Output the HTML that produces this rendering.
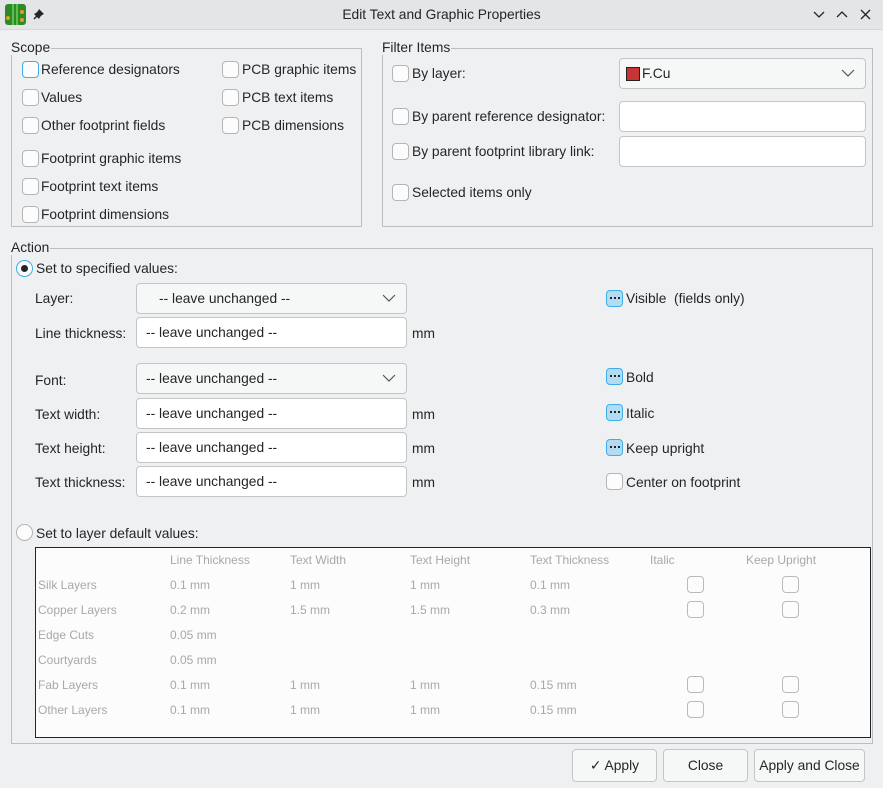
<!DOCTYPE html>
<html><head><meta charset="utf-8"><style>
*{box-sizing:border-box;margin:0;padding:0}
body{width:883px;height:788px;overflow:hidden;background:#eff0f1;font-family:"Liberation Sans","DejaVu Sans",sans-serif;font-size:13.8px;color:#232627;position:relative}
div,span{position:absolute}
.t{white-space:nowrap;line-height:16px}
.cb{width:17px;height:17px;border:1px solid #b3b5b7;border-radius:4px;background:#fcfcfc}
.gb{border:1px solid #bcbebf}
.gl{background:#eff0f1;padding:0 1px;line-height:14px;white-space:nowrap}
.in{background:#fff;border:1px solid #c3c5c7;border-radius:4px;height:31px;padding:0 9px;line-height:29px;white-space:nowrap}
.dd{background:#f6f7f7;border:1px solid #c3c5c7;border-radius:4px;height:31px;line-height:29px;white-space:nowrap}
.ch{position:absolute;right:9px;top:9px;width:16px;height:10px}
.tc{width:17px;height:17px;border:1px solid #b8babc;border-radius:4px;background:#fcfcfc}
.tri{width:17px;height:17px;border:1px solid #3daee9;border-radius:4px;background:#b3dcf3}
.tri:after{content:"";position:absolute;left:3px;top:6px;width:2px;height:2px;background:#232627;box-shadow:4px 0 #232627,8px 0 #232627}
.g{color:#a6a8aa;font-size:12px}
.btn{border:1px solid #c3c5c7;border-radius:4px;background:#f6f7f7;height:33px;line-height:31px;text-align:center}
</style></head><body>
<div style="left:0;top:0;width:883px;height:30px;background:#e3e5e7;border-bottom:1px solid #d5d7d9"></div>
<div style="left:5px;top:4px;width:21px;height:21px;background:#2d8a2a;border-radius:3px;overflow:hidden">
<span style="left:1px;top:12px;width:4px;height:4px;background:#e0a020;border-radius:2px"></span>
<span style="left:15px;top:6px;width:4px;height:4px;background:#e0a020;border-radius:2px"></span>
<span style="left:15px;top:14px;width:4px;height:4px;background:#e0a020;border-radius:2px"></span>
<span style="left:7px;top:0;width:2px;height:21px;background:#5fbf4a"></span>
<span style="left:11px;top:0;width:2px;height:21px;background:#5fbf4a"></span></div>
<svg style="position:absolute;left:33px;top:8px" width="12" height="12"><path d="M6 1l5 5-2 1-2 2-1 2-5-5 2-1 2-2z" fill="#232627"/><path d="M4 8l-3 3" stroke="#232627" stroke-width="1.5"/></svg>
<div class="t" style="left:0;width:883px;text-align:center;top:7px">Edit Text and Graphic Properties</div>
<svg style="position:absolute;left:812px;top:8px" width="60" height="14" stroke="#232627" stroke-width="1.3" fill="none"><path d="M2 4l5 5 5-5"/><path d="M25 9l5-5 5 5"/><path d="M49 2l9 9M58 2l-9 9"/></svg>

<div class="gb" style="left:11px;top:48px;width:351px;height:179px"></div>
<div class="gl t" style="left:10px;top:41px">Scope</div>
<div class="cb" style="left:22px;top:61px;border-color:#3daee9"></div><div class="t" style="left:41px;top:62px">Reference designators</div>
<div class="cb" style="left:22px;top:89px"></div><div class="t" style="left:41px;top:90px">Values</div>
<div class="cb" style="left:22px;top:117px"></div><div class="t" style="left:41px;top:118px">Other footprint fields</div>
<div class="cb" style="left:22px;top:150px"></div><div class="t" style="left:41px;top:151px">Footprint graphic items</div>
<div class="cb" style="left:22px;top:178px"></div><div class="t" style="left:41px;top:179px">Footprint text items</div>
<div class="cb" style="left:22px;top:206px"></div><div class="t" style="left:41px;top:207px">Footprint dimensions</div>
<div class="cb" style="left:222px;top:61px"></div><div class="t" style="left:242px;top:62px">PCB graphic items</div>
<div class="cb" style="left:222px;top:89px"></div><div class="t" style="left:242px;top:90px">PCB text items</div>
<div class="cb" style="left:222px;top:117px"></div><div class="t" style="left:242px;top:118px">PCB dimensions</div>

<div class="gb" style="left:382px;top:48px;width:491px;height:179px"></div>
<div class="gl t" style="left:381px;top:41px">Filter Items</div>
<div class="cb" style="left:392px;top:65px"></div><div class="t" style="left:412px;top:66px">By layer:</div>
<div class="dd" style="left:619px;top:58px;width:247px;padding-left:22px">F.Cu<span style="left:6px;top:8px;width:14px;height:14px;background:#c83434;border:1px solid #222"></span><svg class="ch" stroke="#555" fill="none" stroke-width="1.2"><path d="M2 2l6 6 6-6"/></svg></div>
<div class="cb" style="left:392px;top:108px"></div><div class="t" style="left:412px;top:109px">By parent reference designator:</div>
<div class="in" style="left:619px;top:101px;width:247px"></div>
<div class="cb" style="left:392px;top:143px"></div><div class="t" style="left:412px;top:144px">By parent footprint library link:</div>
<div class="in" style="left:619px;top:136px;width:247px"></div>
<div class="cb" style="left:392px;top:184px"></div><div class="t" style="left:412px;top:185px">Selected items only</div>

<div class="gb" style="left:11px;top:248px;width:862px;height:496px"></div>
<div class="gl t" style="left:10px;top:241px">Action</div>
<div style="left:16px;top:260px;width:17px;height:17px;border:1px solid #3daee9;border-radius:50%;background:#fcfcfc"><span style="left:4px;top:4px;width:7px;height:7px;border-radius:50%;background:#232627"></span></div>
<div class="t" style="left:36px;top:261px">Set to specified values:</div>

<div class="t" style="left:35px;top:291px">Layer:</div>
<div class="dd" style="left:136px;top:283px;width:271px;padding-left:22px">-- leave unchanged --<svg class="ch" stroke="#555" fill="none" stroke-width="1.2"><path d="M2 2l6 6 6-6"/></svg></div>
<div class="t" style="left:35px;top:326px">Line thickness:</div>
<div class="in" style="left:136px;top:317px;width:271px">-- leave unchanged --</div><div class="t" style="left:412px;top:326px">mm</div>
<div class="t" style="left:35px;top:373px">Font:</div>
<div class="dd" style="left:136px;top:363px;width:271px;padding-left:9px">-- leave unchanged --<svg class="ch" stroke="#555" fill="none" stroke-width="1.2"><path d="M2 2l6 6 6-6"/></svg></div>
<div class="t" style="left:35px;top:407px">Text width:</div>
<div class="in" style="left:136px;top:398px;width:271px">-- leave unchanged --</div><div class="t" style="left:412px;top:407px">mm</div>
<div class="t" style="left:35px;top:441px">Text height:</div>
<div class="in" style="left:136px;top:432px;width:271px">-- leave unchanged --</div><div class="t" style="left:412px;top:441px">mm</div>
<div class="t" style="left:35px;top:475px">Text thickness:</div>
<div class="in" style="left:136px;top:466px;width:271px">-- leave unchanged --</div><div class="t" style="left:412px;top:475px">mm</div>

<div class="tri" style="left:606px;top:290px"></div><div class="t" style="left:626px;top:291px">Visible&nbsp; (fields only)</div>
<div class="tri" style="left:606px;top:368px"></div><div class="t" style="left:626px;top:370px">Bold</div>
<div class="tri" style="left:606px;top:404px"></div><div class="t" style="left:626px;top:406px">Italic</div>
<div class="tri" style="left:606px;top:439px"></div><div class="t" style="left:626px;top:441px">Keep upright</div>
<div class="cb" style="left:606px;top:473px"></div><div class="t" style="left:626px;top:475px">Center on footprint</div>

<div style="left:16px;top:524px;width:17px;height:17px;border:1px solid #b3b5b7;border-radius:50%;background:#fcfcfc"></div>
<div class="t" style="left:36px;top:526px">Set to layer default values:</div>

<div style="left:35px;top:547px;width:836px;height:191px;background:#fcfcfc;border:1px solid #232627"></div>
<div class="t g" style="left:170px;top:552px">Line Thickness</div>
<div class="t g" style="left:290px;top:552px">Text Width</div>
<div class="t g" style="left:410px;top:552px">Text Height</div>
<div class="t g" style="left:530px;top:552px">Text Thickness</div>
<div class="t g" style="left:650px;top:552px">Italic</div>
<div class="t g" style="left:746px;top:552px">Keep Upright</div>

<div class="t g" style="left:38px;top:577px">Silk Layers</div><div class="t g" style="left:170px;top:577px">0.1 mm</div><div class="t g" style="left:290px;top:577px">1 mm</div><div class="t g" style="left:410px;top:577px">1 mm</div><div class="t g" style="left:530px;top:577px">0.1 mm</div>
<div class="tc" style="left:687px;top:576px"></div><div class="tc" style="left:782px;top:576px"></div>
<div class="t g" style="left:38px;top:602px">Copper Layers</div><div class="t g" style="left:170px;top:602px">0.2 mm</div><div class="t g" style="left:290px;top:602px">1.5 mm</div><div class="t g" style="left:410px;top:602px">1.5 mm</div><div class="t g" style="left:530px;top:602px">0.3 mm</div>
<div class="tc" style="left:687px;top:601px"></div><div class="tc" style="left:782px;top:601px"></div>
<div class="t g" style="left:38px;top:627px">Edge Cuts</div><div class="t g" style="left:170px;top:627px">0.05 mm</div>
<div class="t g" style="left:38px;top:652px">Courtyards</div><div class="t g" style="left:170px;top:652px">0.05 mm</div>
<div class="t g" style="left:38px;top:677px">Fab Layers</div><div class="t g" style="left:170px;top:677px">0.1 mm</div><div class="t g" style="left:290px;top:677px">1 mm</div><div class="t g" style="left:410px;top:677px">1 mm</div><div class="t g" style="left:530px;top:677px">0.15 mm</div>
<div class="tc" style="left:687px;top:676px"></div><div class="tc" style="left:782px;top:676px"></div>
<div class="t g" style="left:38px;top:702px">Other Layers</div><div class="t g" style="left:170px;top:702px">0.1 mm</div><div class="t g" style="left:290px;top:702px">1 mm</div><div class="t g" style="left:410px;top:702px">1 mm</div><div class="t g" style="left:530px;top:702px">0.15 mm</div>
<div class="tc" style="left:687px;top:701px"></div><div class="tc" style="left:782px;top:701px"></div>

<div class="btn" style="left:572px;top:749px;width:85px">✓ Apply</div>
<div class="btn" style="left:663px;top:749px;width:85px">Close</div>
<div class="btn" style="left:754px;top:749px;width:111px">Apply and Close</div>
</body></html>
